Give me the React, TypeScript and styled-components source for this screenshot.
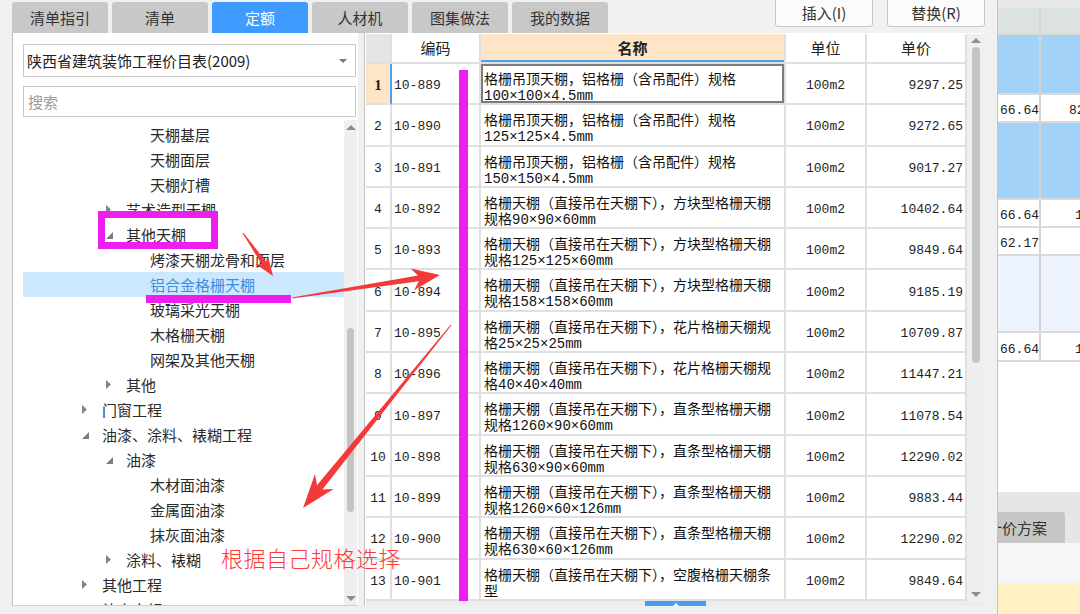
import React from 'react';
import styled, { createGlobalStyle } from 'styled-components';

const GlobalStyle = createGlobalStyle`
  html, body { margin: 0; padding: 0; }
  body {
    background: #f0f0f0;
    font-family: "Noto Sans CJK SC", "Liberation Sans", sans-serif;
  }
`;

const MONO = `"Liberation Mono", "Noto Sans CJK SC", monospace`;

const Page = styled.div`
  position: relative;
  width: 1080px;
  height: 614px;
  overflow: hidden;
  display: flex;
  background: #f0f0f0;
  color: #222;
`;

const MainColumn = styled.div`
  width: 985px;
  display: flex;
  flex-direction: column;
`;

const TopBar = styled.div`
  height: 33px;
  display: flex;
  align-items: flex-start;
  padding: 0 0 0 12px;
  box-sizing: border-box;
`;

const Tabs = styled.div`
  display: flex;
  gap: 4px;
  margin-top: 2px;
`;

const Tab = styled.div<{ $active?: boolean }>`
  width: 96px;
  height: 31px;
  border-radius: 3px 3px 0 0;
  background: ${({ $active }) => ($active ? '#3f9bff' : '#c8c8c8')};
  color: ${({ $active }) => ($active ? '#fff' : '#333')};
  font-size: 15px;
  line-height: 31px;
  text-align: center;
`;

const Actions = styled.div`
  margin-left: auto;
  display: flex;
  gap: 14px;
  margin-top: -4px;
`;

const ActionButton = styled.div`
  width: 98px;
  height: 31px;
  box-sizing: border-box;
  padding-top: 3px;
  border: 1px solid #c6c6c6;
  border-radius: 3px;
  background: #fbfbfb;
  color: #333;
  font-size: 15px;
  line-height: 26px;
  text-align: center;
`;

const Body = styled.div`
  height: 581px;
  display: flex;
  align-items: flex-start;
  gap: 6px;
  padding-left: 12px;
`;

/* ---------- left tree panel ---------- */

const TreePanel = styled.div`
  width: 346px;
  height: 573px;
  box-sizing: border-box;
  background: #fff;
  border-left: 1px solid #bdbdbd;
  border-bottom: 1px solid #d0d0d0;
  padding: 11px 1px 0 10px;
  display: flex;
  flex-direction: column;
`;

const SelectBox = styled.div`
  height: 33px;
  margin-right: 1px;
  box-sizing: border-box;
  border: 1px solid #c8c8c8;
  display: flex;
  align-items: center;
  padding: 0 8px 0 3px;
  font-size: 15px;
  color: #222;
`;

const Caret = styled.span`
  margin-left: auto;
  width: 0;
  height: 0;
  border-left: 4px solid transparent;
  border-right: 4px solid transparent;
  border-top: 4px solid #777;
`;

const SearchBox = styled.div`
  margin: 9px 1px 0 0;
  height: 31px;
  box-sizing: border-box;
  border: 1px solid #c8c8c8;
  padding-left: 4px;
  font-size: 15px;
  line-height: 29px;
  color: #9a9a9a;
`;

const TreeArea = styled.div`
  margin-top: 3px;
  height: 485px;
  display: flex;
`;

const TreeList = styled.div`
  flex: 1;
  padding-top: 2px;
  overflow: hidden;
`;

const TreeRow = styled.div<{ $level: number; $selected?: boolean }>`
  height: 25px;
  display: flex;
  align-items: center;
  padding-left: ${({ $level }) => 60 + 24 * ($level - 1)}px;
  margin-left: -1px;
  background: ${({ $selected }) => ($selected ? '#cce8ff' : 'transparent')};
  color: ${({ $selected }) => ($selected ? '#3b8de0' : '#2a2a2a')};
  font-size: 15px;
  white-space: nowrap;
`;

const ExpanderSlot = styled.span`
  width: 20px;
  display: flex;
  align-items: center;
`;

const Scroll = styled.div<{ $w: number }>`
  width: ${({ $w }) => $w}px;
  display: flex;
  flex-direction: column;
  align-items: center;
  background: #efefef;
`;

const ScrollArrow = styled.div<{ $up?: boolean; $h: number }>`
  height: ${({ $h }) => $h}px;
  width: 100%;
  display: flex;
  align-items: center;
  justify-content: center;
  &::after {
    content: '';
    border-left: 5px solid transparent;
    border-right: 5px solid transparent;
    ${({ $up }) => ($up ? 'border-bottom' : 'border-top')}: 5px solid #8c8c8c;
  }
`;

const ScrollTrack = styled.div`
  flex: 1;
  width: 100%;
  display: flex;
  justify-content: center;
`;

const ScrollThumb = styled.div<{ $top: number; $h: number; $w: number }>`
  margin-top: ${({ $top }) => $top}px;
  height: ${({ $h }) => $h}px;
  width: ${({ $w }) => $w}px;
  border-radius: 4px;
  background: #c4c4c4;
`;

/* ---------- table ---------- */

const TablePanel = styled.div`
  width: 621px;
  height: 573px;
  box-sizing: border-box;
  border-left: 1px solid #c3c3c3;
  padding: 1px 0 0 1px;
  display: flex;
  flex-direction: column;
  background: #fff;
`;

const TableMain = styled.div`
  height: 567px;
  display: flex;
`;

const Grid = styled.div`
  width: 601px;
  overflow: hidden;
`;

const COLS = '26px 89px 305px 81px 100px';

const HeadRow = styled.div`
  display: grid;
  grid-template-columns: ${COLS};
  height: 30px;
`;

const BodyRow = styled.div`
  display: grid;
  grid-template-columns: ${COLS};
  height: 41.3px;
`;

const HeadCell = styled.div<{ $tone?: 'corner' | 'accent' }>`
  box-sizing: border-box;
  border-right: 2px solid #e0e0e0;
  border-bottom: 2px solid #e0e0e0;
  background: ${({ $tone }) =>
    $tone === 'corner' ? '#e5e5e5' : $tone === 'accent' ? '#fde5c6' : '#fff'};
  font-weight: ${({ $tone }) => ($tone === 'accent' ? 700 : 400)};
  ${({ $tone }) => ($tone === 'accent' ? 'box-shadow: inset 0 -2px 0 #4d9de8;' : '')}
  font-size: 15px;
  line-height: 28px;
  text-align: center;
  color: #222;
`;

const Cell = styled.div`
  box-sizing: border-box;
  border-right: 2px solid #e0e0e0;
  border-bottom: 2px solid #e0e0e0;
  display: flex;
  align-items: center;
  padding-top: 4px;
  font-family: ${MONO};
  font-size: 13px;
  color: #1e1e1e;
  white-space: nowrap;
`;

const NumCell = styled(Cell)<{ $active?: boolean }>`
  justify-content: center;
  background: ${({ $active }) => ($active ? '#fde5c6' : '#fff')};
  font-family: ${({ $active }) => ($active ? '"Liberation Serif", serif' : MONO)};
  font-weight: ${({ $active }) => ($active ? 700 : 400)};
  font-size: ${({ $active }) => ($active ? 15 : 13)}px;
  ${({ $active }) => ($active ? 'border-right-color: #4d9de8;' : '')}
`;

const CodeCell = styled(Cell)`
  padding-left: 2px;
`;

const NameCell = styled.div<{ $focused?: boolean }>`
  box-sizing: border-box;
  border-right: 2px solid #e0e0e0;
  border-bottom: 2px solid #e0e0e0;
  padding: 8px 3px 0 3px;
  font-family: ${MONO};
  font-size: 14px;
  line-height: 16px;
  color: #111;
  white-space: nowrap;
  overflow: hidden;
  ${({ $focused }) => ($focused ? 'box-shadow: inset 0 0 0 2px #7c7c7c;' : '')}
`;

const UnitCell = styled(Cell)`
  justify-content: center;
`;

const PriceCell = styled(Cell)`
  justify-content: flex-end;
  padding-right: 2px;
`;

const BottomStrip = styled.div`
  height: 5px;
  background: #ececec;
  padding-left: 279px;
`;

const CollapseHandle = styled.div`
  width: 61px;
  height: 5px;
  background: #4a9cf0;
  display: flex;
  justify-content: center;
  &::after {
    content: '';
    margin-top: 1px;
    border-left: 3px solid transparent;
    border-right: 3px solid transparent;
    border-bottom: 3px solid #fff;
  }
`;

/* ---------- splitter & right panel ---------- */

const Splitter = styled.div`
  width: 13px;
  box-sizing: border-box;
  border-right: 1px solid #c4c4c4;
  background: #f0f0f0;
`;

const RightPanel = styled.div`
  width: 82px;
  display: flex;
  flex-direction: column;
  overflow: hidden;
  background: #fff;
`;

const RightRow = styled.div<{ $h: number; $bg: string; $grid?: boolean }>`
  height: ${({ $h }) => $h}px;
  flex-shrink: 0;
  box-sizing: border-box;
  background: ${({ $bg }) => $bg};
  display: flex;
  ${({ $grid }) => ($grid ? 'border-bottom: 2px solid #dadada;' : '')}
`;

const RightCell = styled.div<{ $first?: boolean; $pad?: number }>`
  width: ${({ $first }) => ($first ? '43px' : '60px')};
  flex-shrink: 0;
  box-sizing: border-box;
  ${({ $first }) => ($first ? 'border-right: 2px solid #d4d4d4;' : '')}
  padding: 5px 0 0 ${({ $pad }) => $pad ?? 2}px;
  display: flex;
  align-items: center;
  font-family: ${MONO};
  font-size: 13px;
  color: #222;
  white-space: nowrap;
`;

const BottomTab = styled.div`
  margin-left: -13px;
  width: 78px;
  height: 31px;
  background: #c6c6c6;
  border-radius: 0 3px 0 0;
  padding-left: 2px;
  font-size: 15px;
  line-height: 31px;
  color: #333;
  white-space: nowrap;
`;

/* ---------- annotations ---------- */

const Overlay = styled.svg`
  position: absolute;
  left: 0;
  top: 0;
  pointer-events: none;
`;

const Note = styled.div`
  position: absolute;
  left: 221px;
  top: 541px;
  font-size: 22px;
  letter-spacing: 0.5px;
  color: #ff3838;
  font-weight: 300;
  white-space: nowrap;
`;

type TreeItem = { label: string; level: number; state?: 'open' | 'closed'; selected?: boolean };

const tree: TreeItem[] = [
  { label: '天棚基层', level: 3 },
  { label: '天棚面层', level: 3 },
  { label: '天棚灯槽', level: 3 },
  { label: '艺术造型天棚', level: 2, state: 'closed' },
  { label: '其他天棚', level: 2, state: 'open' },
  { label: '烤漆天棚龙骨和面层', level: 3 },
  { label: '铝合金格栅天棚', level: 3, selected: true },
  { label: '玻璃采光天棚', level: 3 },
  { label: '木格栅天棚', level: 3 },
  { label: '网架及其他天棚', level: 3 },
  { label: '其他', level: 2, state: 'closed' },
  { label: '门窗工程', level: 1, state: 'closed' },
  { label: '油漆、涂料、裱糊工程', level: 1, state: 'open' },
  { label: '油漆', level: 2, state: 'open' },
  { label: '木材面油漆', level: 3 },
  { label: '金属面油漆', level: 3 },
  { label: '抹灰面油漆', level: 3 },
  { label: '涂料、裱糊', level: 2, state: 'closed' },
  { label: '其他工程', level: 1, state: 'closed' },
  { label: '补充定额', level: 1, state: 'closed' },
];

const A = '格栅吊顶天棚，铝格栅（含吊配件）规格';
const B = '格栅天棚（直接吊在天棚下），方块型格栅天棚';
const C = '格栅天棚（直接吊在天棚下），花片格栅天棚规';
const D = '格栅天棚（直接吊在天棚下），直条型格栅天棚';

const rows = [
  { code: '10-889', name: [A, '100×100×4.5mm'], price: '9297.25' },
  { code: '10-890', name: [A, '125×125×4.5mm'], price: '9272.65' },
  { code: '10-891', name: [A, '150×150×4.5mm'], price: '9017.27' },
  { code: '10-892', name: [B, '规格90×90×60mm'], price: '10402.64' },
  { code: '10-893', name: [B, '规格125×125×60mm'], price: '9849.64' },
  { code: '10-894', name: [B, '规格158×158×60mm'], price: '9185.19' },
  { code: '10-895', name: [C, '格25×25×25mm'], price: '10709.87' },
  { code: '10-896', name: [C, '格40×40×40mm'], price: '11447.21' },
  { code: '10-897', name: [D, '规格1260×90×60mm'], price: '11078.54' },
  { code: '10-898', name: [D, '规格630×90×60mm'], price: '12290.02' },
  { code: '10-899', name: [D, '规格1260×60×126mm'], price: '9883.44' },
  { code: '10-900', name: [D, '规格630×60×126mm'], price: '12290.02' },
  { code: '10-901', name: ['格栅天棚（直接吊在天棚下），空腹格栅天棚条', '型'], price: '9849.64' },
];

function Expander({ state }: { state?: 'open' | 'closed' }) {
  if (state === 'closed') {
    return (
      <svg width="6" height="9" viewBox="0 0 6 9">
        <polygon points="0,0 5,4.5 0,9" fill="#858585" />
      </svg>
    );
  }
  if (state === 'open') {
    return (
      <svg width="8" height="8" viewBox="0 0 8 8">
        <polygon points="7,1 7,8 0,8" fill="#7c7c7c" />
      </svg>
    );
  }
  return null;
}

function ScrollBar(props: { w: number; arrowH: number; top: number; h: number; thumbW: number }) {
  return (
    <Scroll $w={props.w}>
      <ScrollArrow $up $h={props.arrowH} />
      <ScrollTrack>
        <ScrollThumb $top={props.top} $h={props.h} $w={props.thumbW} />
      </ScrollTrack>
      <ScrollArrow $h={props.arrowH} />
    </Scroll>
  );
}

// tapered annotation arrow, thin at the tail
function arrow(x1: number, y1: number, x2: number, y2: number, headLen: number, headW: number, shaftW: number) {
  const len = Math.hypot(x2 - x1, y2 - y1);
  const ux = (x2 - x1) / len;
  const uy = (y2 - y1) / len;
  const nx = -uy;
  const ny = ux;
  const jx = x2 - ux * headLen * 0.78;
  const jy = y2 - uy * headLen * 0.78;
  const wx = x2 - ux * headLen;
  const wy = y2 - uy * headLen;
  const pts = [
    [x1 + nx * 0.5, y1 + ny * 0.5],
    [jx + (nx * shaftW) / 2, jy + (ny * shaftW) / 2],
    [wx + (nx * headW) / 2, wy + (ny * headW) / 2],
    [x2, y2],
    [wx - (nx * headW) / 2, wy - (ny * headW) / 2],
    [jx - (nx * shaftW) / 2, jy - (ny * shaftW) / 2],
    [x1 - nx * 0.5, y1 - ny * 0.5],
  ];
  return pts.map((p) => p.map((v) => v.toFixed(1)).join(',')).join(' ');
}

const rightRows = [
  { h: 8, bg: '#e8e8e8' },
  { h: 27, bg: '#dce3de', grid: true },
  { h: 60, bg: '#a3d2f8', grid: true },
  { h: 28, bg: '#fff', grid: true, a: '66.64', b: '826.58', pad: 28 },
  { h: 77, bg: '#a3d2f8', grid: true },
  { h: 28, bg: '#fff', grid: true, a: '66.64', b: '133.28', pad: 34 },
  { h: 28, bg: '#fff', grid: true, a: '62.17', b: '', pad: 34 },
  { h: 77, bg: '#edf4fd', grid: true },
  { h: 29, bg: '#fff', grid: true, a: '66.64', b: '133.28', pad: 34 },
];

export default function App() {
  return (
    <>
      <GlobalStyle />
      <Page>
        <MainColumn>
          <TopBar>
            <Tabs>
              <Tab>清单指引</Tab>
              <Tab>清单</Tab>
              <Tab $active>定额</Tab>
              <Tab>人材机</Tab>
              <Tab>图集做法</Tab>
              <Tab>我的数据</Tab>
            </Tabs>
            <Actions>
              <ActionButton>插入(I)</ActionButton>
              <ActionButton>替换(R)</ActionButton>
            </Actions>
          </TopBar>

          <Body>
            <TreePanel>
              <SelectBox>
                陕西省建筑装饰工程价目表(2009)
                <Caret />
              </SelectBox>
              <SearchBox>搜索</SearchBox>
              <TreeArea>
                <TreeList>
                  {tree.map((t) => (
                    <TreeRow key={t.label} $level={t.level} $selected={t.selected}>
                      <ExpanderSlot>
                        <Expander state={t.state} />
                      </ExpanderSlot>
                      {t.label}
                    </TreeRow>
                  ))}
                </TreeList>
                <ScrollBar w={13} arrowH={14} top={194} h={184} thumbW={7} />
              </TreeArea>
            </TreePanel>

            <TablePanel>
              <TableMain>
                <Grid>
                  <HeadRow>
                    <HeadCell $tone="corner" />
                    <HeadCell>编码</HeadCell>
                    <HeadCell $tone="accent">名称</HeadCell>
                    <HeadCell>单位</HeadCell>
                    <HeadCell>单价</HeadCell>
                  </HeadRow>
                  {rows.map((r, i) => (
                    <BodyRow key={r.code}>
                      <NumCell $active={i === 0}>{i + 1}</NumCell>
                      <CodeCell>{r.code}</CodeCell>
                      <NameCell $focused={i === 0}>
                        {r.name[0]}
                        <br />
                        {r.name[1]}
                      </NameCell>
                      <UnitCell>100m2</UnitCell>
                      <PriceCell>{r.price}</PriceCell>
                    </BodyRow>
                  ))}
                </Grid>
                <ScrollBar w={18} arrowH={13} top={0} h={316} thumbW={8} />
              </TableMain>
              <BottomStrip>
                <CollapseHandle />
              </BottomStrip>
            </TablePanel>
          </Body>
        </MainColumn>

        <Splitter />

        <RightPanel>
          {rightRows.map((r, i) => (
            <RightRow key={i} $h={r.h} $bg={r.bg} $grid={r.grid}>
              {r.grid && (
                <>
                  <RightCell $first>{r.a}</RightCell>
                  <RightCell $pad={r.pad}>{r.b}</RightCell>
                </>
              )}
            </RightRow>
          ))}
          <RightRow $h={130} $bg="#fff" />
          <RightRow $h={20} $bg="#e6e6e6" />
          <RightRow $h={31} $bg="#e6e6e6">
            <BottomTab>计价方案</BottomTab>
          </RightRow>
          <RightRow $h={40} $bg="#f6f6f6" />
          <RightRow $h={31} $bg="#fff1c4" />
        </RightPanel>

        <Overlay width="1080" height="614" viewBox="0 0 1080 614">
          <rect x="101.5" y="214.5" width="113" height="31" fill="none" stroke="#ee1fee" strokeWidth="7" />
          <rect x="146" y="295" width="145" height="8" fill="#ee1fee" />
          <rect x="459" y="70" width="9" height="531" fill="#ee1fee" />
          <polygon points={arrow(292, 298, 440, 275, 28, 22, 6)} fill="#f23a3a" />
          <polygon points={arrow(243, 233, 273, 276, 20, 15, 5)} fill="#f23a3a" />
          <polygon points={arrow(451, 325, 303, 508, 34, 24, 7)} fill="#f23a3a" />
        </Overlay>
        <Note>根据自己规格选择</Note>
      </Page>
    </>
  );
}
